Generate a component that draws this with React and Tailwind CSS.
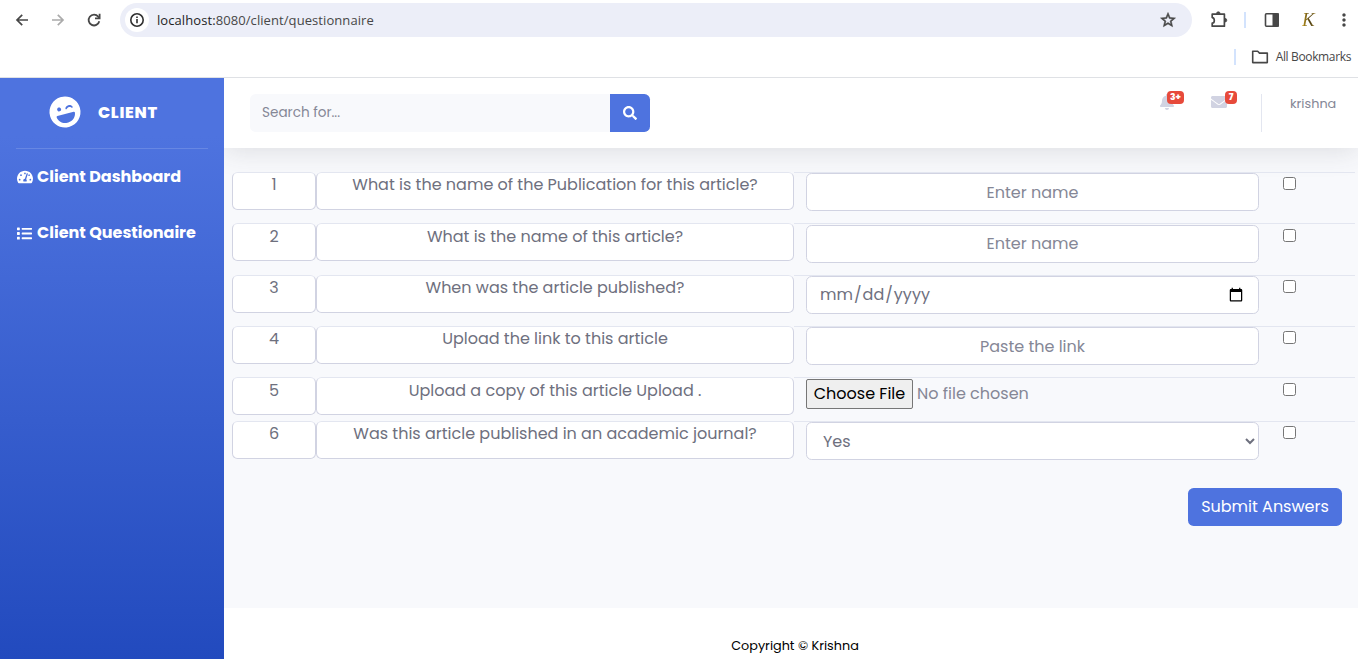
import React from "react";
import { FaLaughWink, FaTachometerAlt, FaList, FaBell, FaEnvelope, FaSearch } from "react-icons/fa";
import { MdStarOutline, MdMoreVert } from "react-icons/md";

const control =
  "block h-[38px] w-full rounded-[5.6px] border border-[#d1d3e2] bg-white px-3 text-base text-[#6e707e] outline-none placeholder:text-[#858796] placeholder:opacity-100";

const questions = [
  { text: "What is the name of the Publication for this article?", row: "h-[51px]", pad: "pt-0", field: <input className={`${control} text-center`} placeholder="Enter name" /> },
  { text: "What is the name of this article?", row: "h-[52px]", pad: "pt-px", field: <input className={`${control} pb-[2px] text-center`} placeholder="Enter name" /> },
  { text: "When was the article published?", row: "h-[51px]", pad: "pt-0", field: <input type="date" className={control} /> },
  { text: "Upload the link to this article", row: "h-[51px]", pad: "pt-0", field: <input className={`${control} text-center`} placeholder="Paste the link" /> },
  {
    text: "Upload a copy of this article Upload .",
    row: "h-[44px]",
    pad: "pt-px",
    field: (
      <input
        type="file"
        className="block h-[30px] w-full text-base leading-6 text-[#858796] file:mr-1 file:h-[30px] file:w-[107px] file:rounded-[2px] file:border file:border-solid file:border-[#767676] file:bg-[#efefef] file:p-0 file:text-center file:text-black"
      />
    ),
  },
  {
    text: "Was this article published in an academic journal?",
    row: "h-[39px]",
    pad: "pt-0",
    field: (
      <select className={control} defaultValue="Yes">
        <option>Yes</option>
        <option>No</option>
      </select>
    ),
  },
];

function Browser() {
  return (
    <header className="relative z-10 h-[78px] shrink-0 border-b border-[#dfe1e5] bg-white font-['Open_Sans','Noto_Sans',sans-serif] text-[#474747]">
      <div className="flex h-10 items-center">
        <svg viewBox="0 0 16 16" className="ml-[14px] size-4" fill="none" stroke="#474747" strokeWidth="1.7">
          <path d="M14 8H3.2M8.2 2.8L3 8l5.2 5.2" />
        </svg>
        <svg viewBox="0 0 16 16" className="ml-5 size-4" fill="none" stroke="#ababab" strokeWidth="1.7">
          <path d="M2 8h10.8M7.8 2.8L13 8l-5.2 5.2" />
        </svg>
        <svg viewBox="0 0 18 18" className="ml-[19px] size-[18px]" fill="none" stroke="#474747" strokeWidth="1.8">
          <path d="M14.3 10.3A5.4 5.4 0 1 1 13.2 5.6L14.5 7" />
          <path d="M14.6 2.8v4.6H10" />
        </svg>
        <div className="ml-[17px] flex h-[34px] w-[1072px] items-center rounded-full bg-[#eceef8] pr-[15px] pl-[5px]">
          <span className="flex size-6 items-center justify-center rounded-full bg-white">
            <svg viewBox="0 0 16 16" className="size-4" fill="none" stroke="#303030" strokeWidth="1.6">
              <circle cx="8" cy="8" r="6.2" />
              <path d="M8 7v4.2M8 4.5v1.6" />
            </svg>
          </span>
          <span className="ml-2 pt-px text-[13px] tracking-[0.08px]">
            <span className="text-[#1f1f1f]">localhost:</span>8080/client/questionnaire
          </span>
          <MdStarOutline className="ml-auto size-[18px]" stroke="currentColor" strokeWidth="0.7" />
        </div>
        <svg viewBox="0 0 18 18" className="ml-[18px] size-[18px]" fill="none" stroke="#474747" strokeWidth="1.7" strokeLinejoin="round">
          <path d="M2.2 3.2H14.4V15.2H2.2V12.2C5 12 5 6.8 2.2 6.6z" />
          <path d="M6.5 2.6a1.8 1.8 0 0 1 3.6 0zM15 7.4a1.8 1.8 0 0 1 0 3.6z" fill="#474747" strokeWidth="0.8" />
        </svg>
        <span className="ml-[16px] h-4 w-[2px] bg-[#d3e3fd]" />
        <svg viewBox="0 0 16 16" className="ml-[18px] size-4" fill="none" stroke="#474747" strokeWidth="1.6">
          <rect x="1.5" y="1.8" width="12.6" height="12.4" rx="1" />
          <path d="M9.3 2h4.8v12H9.3z" fill="#474747" />
        </svg>
        <span className="ml-[22px] w-4 bg-linear-to-r from-[#c49a15] via-[#4f4014] to-[#c8a43a] bg-clip-text font-['Liberation_Serif',serif] text-[19px] leading-5 text-transparent italic">K</span>
        <MdMoreVert className="ml-[16px] size-[20px] shrink-0" />
      </div>
      <div className="flex h-[34px] items-center justify-end pr-[7px]">
        <span className="h-4 w-[2px] bg-[#d3e3fd]" />
        <svg viewBox="0 0 18 14" className="ml-[15px] h-[14px] w-[18px]" fill="none" stroke="#474747" strokeWidth="1.6" strokeLinejoin="round">
          <path d="M1.7 1.3h5l1.8 1.8h7.8v9.5H1.7z" />
        </svg>
        <span className="ml-[7px] text-xs tracking-[-0.36px]">All Bookmarks</span>
      </div>
    </header>
  );
}

function Sidebar() {
  return (
    <aside className="relative z-10 w-56 shrink-0 bg-linear-to-b from-[#4e73df] from-10% to-[#224abe] px-4 font-bold text-white">
      <div className="flex h-[70px] items-center pb-[2px]">
        <FaLaughWink className="ml-[33px] size-8 -rotate-[15deg]" />
        <span className="ml-[17px] pt-px text-base font-extrabold tracking-[0.7px]">CLIENT</span>
      </div>
      <div className="h-px bg-white/15" />
      <nav>
        <div className="flex h-14 items-center gap-1">
          <FaTachometerAlt className="ml-px size-4" />
          <span>Client Dashboard</span>
        </div>
        <div className="flex h-14 items-center gap-1">
          <FaList className="mr-px ml-px size-[15px]" />
          <span>Client Questionaire</span>
        </div>
      </nav>
    </aside>
  );
}

function Topbar() {
  return (
    <div className="flex h-[70px] shrink-0 bg-white shadow-[0_2.4px_28px_0_rgba(58,59,69,0.15)]">
      <div className="ml-[26px] flex h-[38px] self-center">
        <input className="w-[360px] rounded-l-[5.6px] bg-[#f8f9fc] px-3 text-[13.6px] text-[#6e707e] placeholder:text-[#858796] placeholder:opacity-100" placeholder="Search for..." />
        <button className="flex w-10 items-center justify-center rounded-r-[5.6px] bg-[#4e73df] text-white">
          <FaSearch className="size-[14px]" />
        </button>
      </div>
      <div className="ml-auto flex text-[#d1d3e2]">
        <div className="relative mt-[16px] h-4 w-[24px]">
          <FaBell className="h-4 w-[14px]" />
          <span className="absolute -top-[3px] left-[7px] flex h-[13px] w-[17px] items-center justify-center rounded-[4px] bg-[#e74a3b] text-[9px] font-extrabold text-white">3+</span>
        </div>
        <div className="relative mt-4 ml-[26px] h-4 w-[27px]">
          <FaEnvelope className="ml-[0.5px] size-4" />
          <span className="absolute -top-[3px] left-[15px] flex h-[13px] w-[12px] items-center justify-center rounded-[4px] bg-[#e74a3b] text-[9px] font-extrabold text-white">7</span>
        </div>
        <span className="mt-4 ml-6 h-[38px] w-px bg-[#e3e6f0]" />
        <span className="mt-[17px] ml-7 w-[68px] text-[12.8px] leading-[18px] text-[#858796]">krishna</span>
      </div>
    </div>
  );
}

function Questions() {
  const cell = "h-[38px] shrink-0 rounded-[5.6px] border border-[#d1d3e2] border-t-[#e3e6f0] bg-white text-center leading-6 text-[#6e707e]";
  return (
    <div className="mt-6 ml-2 w-[1123px]">
      {questions.map((q, i) => (
        <div key={i} className={`flex ${q.row}`}>
          <div className={`w-[84px] ${cell} ${q.pad}`}>{i + 1}</div>
          <div className={`w-[478px] ${cell} ${q.pad}`}>{q.text}</div>
          <div className={`flex flex-1 border-t border-[#e3e6f0] pl-3 ${q.pad}`}>
            <div className="w-[453px]">{q.field}</div>
            <input type="checkbox" className="mt-1 ml-6 size-[13px]" />
          </div>
        </div>
      ))}
    </div>
  );
}

export default function App() {
  return (
    <div className="flex h-[659px] w-[1358px] flex-col overflow-hidden bg-[#f8f9fc] font-[Poppins,Inter,'Open_Sans',sans-serif] text-base">
      <Browser />
      <div className="flex min-h-0 flex-1">
        <Sidebar />
        <main className="flex flex-1 flex-col">
          <Topbar />
          <Questions />
          <button className="mt-7 mr-4 h-[38px] w-[154px] self-end rounded-[5.6px] bg-[#4e73df] text-white">Submit Answers</button>
          <footer className="mt-auto h-[51px] bg-white pt-7 pl-2 text-center text-[12.8px] leading-5 text-black">Copyright © Krishna</footer>
        </main>
      </div>
    </div>
  );
}
